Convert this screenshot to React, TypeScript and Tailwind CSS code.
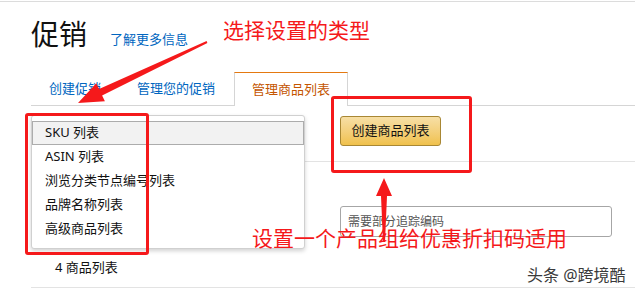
import React from 'react';

const font = { fontFamily: '"Noto Sans", "Noto Sans CJK SC", sans-serif' };

const listTypes = ['SKU 列表', 'ASIN 列表', '浏览分类节点编号列表', '品牌名称列表', '高级商品列表'];

const Tabs: React.FC = () => (
  <div className="flex items-end h-[34px] mt-[22px]">
    <div className="w-[203px] h-full border-b border-[#d5d5d5] flex items-center">
      <span className="ml-[18px] text-[13px] text-[#0066c0]">创建促销</span>
      <span className="ml-[36px] text-[13px] text-[#0066c0]">管理您的促销</span>
    </div>
    <div className="w-[114px] h-full border-t border-x border-[#d5d5d5] border-t-[#e47911] flex items-center justify-center">
      <span className="text-[13px] text-[#c45500]">管理商品列表</span>
    </div>
    <div className="flex-1 h-full border-b border-[#d5d5d5]" />
  </div>
);

const Annotations: React.FC = () => (
  <>
    {/* Red boxes */}
    <div className="absolute left-[25px] top-[113px] w-[124px] h-[142px] border-[3px] border-[#f5191b] rounded-[3px]" />
    <div className="absolute left-[331px] top-[96px] w-[141px] h-[77px] border-[3px] border-[#f5191b] rounded-[3px]" />

    {/* Red arrows */}
    <svg className="absolute inset-0 pointer-events-none" width="635" height="290">
      <polygon
        fill="#f5191b"
        points="207.4,42.9 102.1,95.5 104.9,101.3 78,103 96.3,83.3 99.1,89.1 206.6,41.1"
      />
      <polygon
        fill="#f5191b"
        points="384,178 392,196 387,196 385,242 383,242 381,196 376,196"
      />
    </svg>

    {/* Red texts */}
    <div className="absolute left-[223px] top-[17px] text-[21px] leading-[26px] text-[#f5191b]">选择设置的类型</div>
    <div className="absolute left-[252px] top-[225px] text-[21px] leading-[26px] text-[#f5191b]">设置一个产品组给优惠折扣码适用</div>

    {/* Watermark */}
    <div className="absolute left-[527px] top-[264px] text-[16px] leading-[22px] text-[#3a3a3a] [text-shadow:0_0_2px_#fff]">
      头条 @跨境酷
    </div>
  </>
);

const Dropdown: React.FC = () => (
  <div className="absolute left-[31px] top-[115px] w-[274px] h-[134px] bg-white border border-[#d0d0d0] rounded-[3px] shadow-[0_2px_4px_rgba(0,0,0,0.18)] pt-[5px]">
    {listTypes.map((t, i) => (
      <div
        key={t}
        className={`h-[24px] flex items-center pl-[12px] text-[13px] text-[#111] ${
          i === 0 ? 'bg-[#f2f2f2] border border-[#acacac]' : 'border border-transparent'
        }`}
      >
        {t}
      </div>
    ))}
  </div>
);

export default function App() {
  return (
    <div className="relative w-[635px] h-[290px] bg-white overflow-hidden" style={font}>
      <div className="mt-px border-t border-[#dcdcdc]" />
      <div className="pl-[31px]">
        {/* Header */}
        <div className="flex items-end pt-[15px] h-[48px]">
          <h1 className="text-[28px] leading-[32px] text-[#111]">促销</h1>
          <a className="ml-[23px] mb-[1px] text-[13px] text-[#0066c0]">了解更多信息</a>
        </div>

        <Tabs />

        {/* Content */}
        <div className="flex items-center mt-[10px]">
          <div className="w-[274px] h-[30px]" />
          <button className="ml-[35px] w-[101px] h-[30px] rounded-[3px] border border-[#a88734] bg-gradient-to-b from-[#f7dfa5] to-[#f0c14b] text-[13px] text-[#111]">
            创建商品列表
          </button>
        </div>
        <div className="mt-[15px] border-t border-[#e3e3e3]" />

        <div className="mt-[44px] ml-[309px] w-[272px] h-[31px] border border-[#a6a6a6] rounded-[3px] flex items-center pl-[7px] text-[12px] text-[#555]">
          需要部分追踪编码
        </div>

        <div className="mt-[21px] ml-[24px] text-[13px] leading-[18px] text-[#111]">4 商品列表</div>
        <div className="mt-[11px] border-t border-[#e3e3e3]" />
      </div>

      <Dropdown />
      <Annotations />
    </div>
  );
}
